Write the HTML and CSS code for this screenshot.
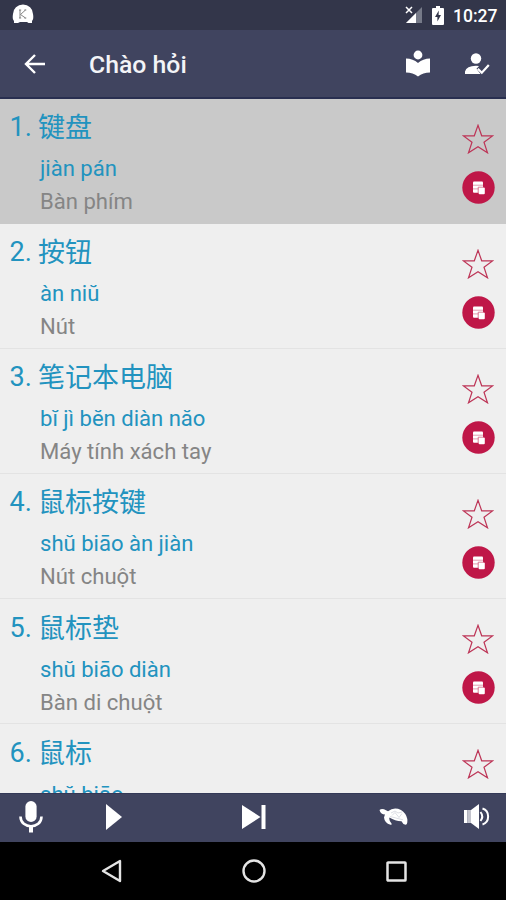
FILE: index.html
```html
<!DOCTYPE html>
<html lang="vi">
<head>
<meta charset="utf-8">
<title>Chào hỏi</title>
<link rel="stylesheet" href="styles.css">
</head>
<body>
<svg class="defs" width="0" height="0">
  <symbol id="star" viewBox="0 0 32 30"><path d="M16 1.3 L19.7 11.8 L30.5 11.9 L22 18.3 L25.5 28.8 L16 22.7 L6.5 28.8 L10 18.3 L1.5 11.9 L12.3 11.8 Z" fill="none" stroke="#bd3557" stroke-width="1.2"/></symbol>
  <symbol id="cards" viewBox="0 0 33 33"><circle cx="16.5" cy="16.5" r="16.2" fill="#bf1748"/><rect x="11" y="10.5" width="10" height="11.3" rx="1" fill="#fff"/><rect x="16.6" y="16.6" width="6.2" height="6.6" rx="1" fill="#fff"/><path d="M11 14.2h10M11 17.9h5.6" stroke="#e08ea5" stroke-width=".9"/><path d="M16.2 22V16.2H21.5" fill="none" stroke="#d4607f" stroke-width=".8"/></symbol>
</svg>
<div class="phone">
  <div class="status">
    <svg class="app" width="22" height="22" viewBox="0 0 22 22"><path d="M2 19V17Q0 15 1 10A10 9.5 0 0 1 21 10Q22 15 20 17V19H16.5L15 18H8L6 19Z" fill="#fff"/><path d="M8 6v8M7 6h2.2M7 14h2.2M13.5 6L8.5 10.5L13.5 14M12.3 6h2M12.3 14h2" stroke="#777" fill="none" stroke-width=".9"/></svg>
    <svg class="signal" width="18" height="18" viewBox="0 0 18 18"><path d="M17 1V17H1Z" fill="#767a88"/><path d="M11 7V17H1Z" fill="#fff"/><path d="M1 1l6 6M7 1L1 7" stroke="#fff" stroke-width="1.5"/></svg>
    <svg class="battery" width="12" height="19" viewBox="0 0 12 19"><path d="M4 0h4v2h3q1 0 1 1v15q0 1-1 1H1q-1 0-1-1V3q0-1 1-1h3z" fill="#fff"/><path d="M6.8 4.5L3 11h2.4v4.5L9 9H6.6z" fill="#33364a"/></svg>
    <span class="clock">10:27</span>
  </div>
  <header class="toolbar">
    <svg class="back" width="22" height="22" viewBox="0 0 22 22"><path d="M21 11H2.5M11 2L2 11L11 20" fill="none" stroke="#fff" stroke-width="2.4"/></svg>
    <h1>Chào hỏi</h1>
    <svg class="reader" width="24" height="27" viewBox="0 0 24 27"><circle cx="12" cy="5" r="4.4" fill="#fff"/><path d="M0 8.5Q7 8.5 12 13Q17 8.5 24 8.5V22.5Q17 22.5 12 26.5Q7 22.5 0 22.5Z" fill="#fff"/></svg>
    <svg class="user" width="25" height="22" viewBox="0 0 25 22"><circle cx="11" cy="5.5" r="5.2" fill="#fff"/><path d="M0 21V18.5Q1.5 13 11 12.8L14 13.1L11.5 15.8L15.5 21Z" fill="#fff"/><path d="M12.8 15.8L16.8 19.7L23.8 12" fill="none" stroke="#fff" stroke-width="2.2"/></svg>
  </header>
  <main class="list">
    <article class="row selected"><div class="words"><h2><span class="num">1.</span><span class="hanzi">键盘</span></h2><p class="pinyin">jiàn pán</p><p class="meaning">Bàn phím</p></div><div class="actions"><svg class="star"><use href="#star"/></svg><svg class="cards"><use href="#cards"/></svg></div></article>
    <article class="row"><div class="words"><h2><span class="num">2.</span><span class="hanzi">按钮</span></h2><p class="pinyin">àn niŭ</p><p class="meaning">Nút</p></div><div class="actions"><svg class="star"><use href="#star"/></svg><svg class="cards"><use href="#cards"/></svg></div></article>
    <article class="row"><div class="words"><h2><span class="num">3.</span><span class="hanzi">笔记本电脑</span></h2><p class="pinyin">bĭ jì bĕn diàn năo</p><p class="meaning">Máy tính xách tay</p></div><div class="actions"><svg class="star"><use href="#star"/></svg><svg class="cards"><use href="#cards"/></svg></div></article>
    <article class="row"><div class="words"><h2><span class="num">4.</span><span class="hanzi">鼠标按键</span></h2><p class="pinyin">shŭ biāo àn jiàn</p><p class="meaning">Nút chuột</p></div><div class="actions"><svg class="star"><use href="#star"/></svg><svg class="cards"><use href="#cards"/></svg></div></article>
    <article class="row"><div class="words"><h2><span class="num">5.</span><span class="hanzi">鼠标垫</span></h2><p class="pinyin">shŭ biāo diàn</p><p class="meaning">Bàn di chuột</p></div><div class="actions"><svg class="star"><use href="#star"/></svg><svg class="cards"><use href="#cards"/></svg></div></article>
    <article class="row"><div class="words"><h2><span class="num">6.</span><span class="hanzi">鼠标</span></h2><p class="pinyin">shŭ biāo</p></div><div class="actions"><svg class="star"><use href="#star"/></svg></div></article>
  </main>
  <footer class="player">
    <svg class="mic" width="24" height="33" viewBox="0 0 24 33"><rect x="6.4" y="1" width="11.2" height="21" rx="5.6" fill="#fff"/><path d="M1.5 16.5C1.5 29.5 22.5 29.5 22.5 16.5" fill="none" stroke="#fff" stroke-width="2.6"/><path d="M12 26v6.5" stroke="#fff" stroke-width="4"/></svg>
    <svg class="play" width="16" height="26" viewBox="0 0 16 26"><path d="M0 0L16 13L0 26Z" fill="#fff"/></svg>
    <svg class="next" width="24" height="24" viewBox="0 0 24 24"><path d="M0 0L18.5 12L0 24ZM19.5 0H23.5V24H19.5Z" fill="#fff"/></svg>
    <svg class="turtle" width="29" height="18" viewBox="0 0 29 18"><path d="M.5 2Q3-.3 7 2.2L9 3.2Q15-1.5 22 2Q27 5 28.3 11Q28.8 16.5 26.5 16.8Q24 16.5 22.5 13.2Q16 13 10.5 9.5Q9.5 12 12.5 15.5Q13 17 11.5 16.8Q5.5 15 5 9.5L6 6.3Q2 7 .5 2Z" fill="#fff"/><path d="M12 5l4-2 3 2 4-1M13 7.5l3-3 4 5 3-4M11 8.5l9 2.3 4 1" fill="none" stroke="#c3c6d1" stroke-width=".6"/></svg>
    <svg class="volume" width="26" height="25" viewBox="0 0 26 25"><path d="M0 6H3.5V19H0ZM7 6L15 0V25L7 19Z" fill="#fff"/><path d="M3.5 6H7V19H3.5Z" fill="#c3c4cd"/><path d="M16.5 8Q20 12.5 16.5 17M18.5 4.5C26 7 26 18 18.5 20.5" fill="none" stroke="#fff" stroke-width="2"/></svg>
  </footer>
  <nav class="system">
    <svg class="sys-back" width="21" height="24" viewBox="0 0 21 24"><path d="M19 2V22L2 12Z" fill="none" stroke="#e4e4e4" stroke-width="2.4" stroke-linejoin="round"/></svg>
    <svg class="sys-home" width="24" height="24" viewBox="0 0 24 24"><circle cx="12" cy="12" r="10.5" fill="none" stroke="#e4e4e4" stroke-width="2.4"/></svg>
    <svg class="sys-recent" width="21" height="21" viewBox="0 0 21 21"><rect x="1.5" y="1.5" width="18" height="18" rx=".6" fill="none" stroke="#e4e4e4" stroke-width="2.5"/></svg>
  </nav>
</div>
</body>
</html>
```
FILE: styles.css
```css
* { box-sizing: border-box; margin: 0; padding: 0; }
body { width: 506px; height: 900px; overflow: hidden; background: #000; font-family: Roboto, "Noto Sans CJK SC", sans-serif; }
svg { display: block; flex: none; }
.defs { height: 0; }
.phone { display: flex; flex-direction: column; width: 506px; height: 900px; }
.status { display: flex; align-items: center; flex: none; height: 30px; background: #33364a; }
.app { margin-left: 12px; }
.signal { margin-left: 371px; }
.battery { margin-left: 9px; }
.clock { margin-left: 9px; padding-top: 2px; font-size: 17.5px; font-weight: 500; color: #fff; line-height: 30px; white-space: nowrap; }
.toolbar { display: flex; align-items: center; flex: none; height: 68.6px; padding-top: 2px; background: #40445f; border-bottom: 2px solid #292f50; }
.back { margin-left: 24px; }
h1 { width: 316px; margin-left: 43px; padding-top: 2px; font-size: 24.8px; font-weight: 500; line-height: 30px; color: #f3f4f7; white-space: nowrap; }
.reader { margin-left: 1px; margin-bottom: 2px; }
.user { margin-left: 35px; }
.list { flex: 1; min-height: 0; overflow: hidden; background: #efefef; }
.row { display: flex; justify-content: space-between; height: 125.15px; border-bottom: 1px solid #e3e3e3; }
.row.selected { background: #c9c9c9; border-color: #c9c9c9; }
.words { padding: 8.4px 0 0 40px; white-space: nowrap; }
h2 { display: flex; margin-left: -31px; font-size: 27px; font-weight: 400; line-height: 40px; color: #2293bf; }
.num { width: 29px; padding-left: 0.5px; }
.hanzi { padding-top: 1px; }
.pinyin { margin-top: 4px; font-size: 22.05px; line-height: 33px; color: #2293bf; }
.meaning { font-size: 22.1px; line-height: 33px; color: #858585; }
.actions { width: 33px; margin-right: 11px; padding-top: 25px; }
.star { width: 32px; height: 30px; }
.cards { width: 33px; height: 33px; margin-top: 17px; }
.player { display: flex; align-items: center; flex: none; height: 49.4px; padding-bottom: 2px; background: #40445f; border-top: 1px solid #343957; }
.mic { margin-left: 19px; }
.play { margin-left: 63px; }
.next { margin-left: 120px; }
.turtle { margin-left: 113px; }
.volume { margin-left: 56px; }
.system { display: flex; align-items: center; flex: none; height: 58px; background: #000; }
.sys-back { margin-left: 101px; }
.sys-home { margin-left: 120px; }
.sys-recent { margin-left: 120px; }
```
